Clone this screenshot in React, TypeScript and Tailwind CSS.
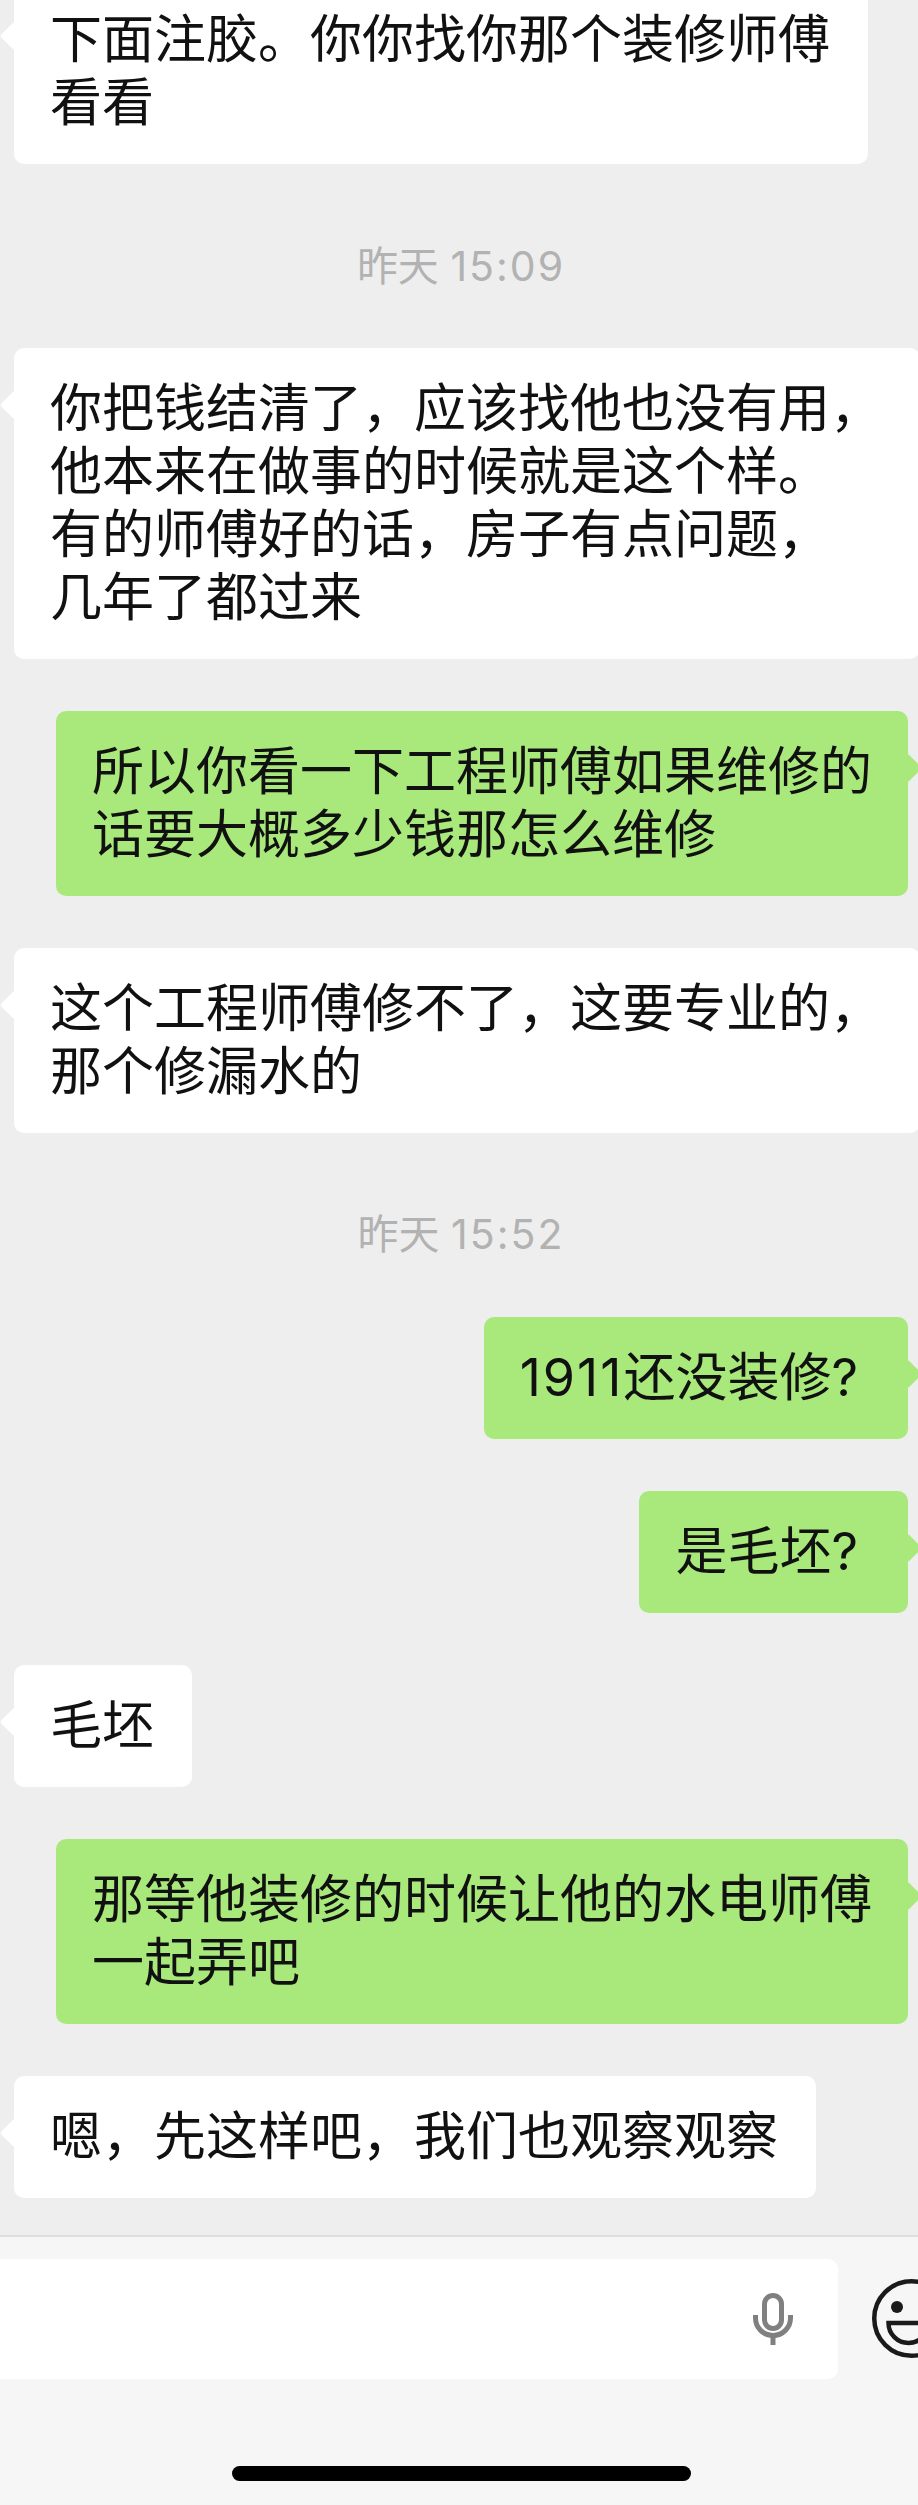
import type { ReactNode } from 'react'

const font = "font-['Inter','Noto_Sans_CJK_SC',sans-serif]"

interface BubbleProps {
  children: ReactNode
  mine?: boolean
  className?: string
}

const Bubble = ({ children, mine, className = '' }: BubbleProps) => {
  return (
    <div className={`flex ${mine ? 'justify-end pr-[10px]' : 'justify-start pl-[14px]'}`}>
      <div
        className={`relative rounded-[10px] pt-[29px] pb-[30px] text-[52px] leading-[63px] whitespace-pre text-[#111] ${
          mine ? 'bg-[#a9e97c] px-[36px]' : 'bg-white pl-[36px] pr-[38px]'
        } ${className}`}
      >
        {children}
        <div
          className={`absolute top-[47px] w-[20px] h-[20px] rotate-45 rounded-[2px] ${
            mine ? 'right-[-10px] bg-[#a9e97c]' : 'left-[-10px] bg-white'
          }`}
        />
      </div>
    </div>
  )
}

const Time = ({ day, clock }: { day: string; clock: string }) => (
  <div className="text-center pl-[4px] text-[41px] leading-[50px] text-[#b2b2b2]">
    {day} <span className="tracking-[2px]">{clock}</span>
  </div>
)

export default function App() {
  return (
    <div className={`h-[2505px] w-[918px] overflow-hidden flex flex-col bg-[#eeeeee] ${font}`}>
      <div className="flex-1 flex flex-col justify-end overflow-hidden pb-[37px]">
        <Bubble>
          <div>下面注胶。你你找你那个装修师傅</div>
          <div>看看</div>
        </Bubble>
        <div className="mt-[77px] mb-[57px]">
          <Time day="昨天" clock="15:09" />
        </div>
        <div className="flex flex-col gap-[52px]">
          <Bubble>
            <div>你把钱结清了，应该找他也没有用，</div>
            <div>他本来在做事的时候就是这个样。</div>
            <div>有的师傅好的话，房子有点问题，</div>
            <div>几年了都过来</div>
          </Bubble>
          <Bubble mine>
            <div>所以你看一下工程师傅如果维修的</div>
            <div>话要大概多少钱那怎么维修</div>
          </Bubble>
          <Bubble>
            <div>这个工程师傅修不了，这要专业的，</div>
            <div>那个修漏水的</div>
          </Bubble>
        </div>
        <div className="mt-[76px] mb-[58px]">
          <Time day="昨天" clock="15:52" />
        </div>
        <div className="flex flex-col gap-[52px]">
          <Bubble mine className="!pr-[50px]">
            <span className="tracking-[2px]">1911</span>还没装修?
          </Bubble>
          <Bubble mine className="!pr-[50px]">
            是毛坯?
          </Bubble>
          <Bubble>毛坯</Bubble>
          <Bubble mine>
            <div>那等他装修的时候让他的水电师傅</div>
            <div>一起弄吧</div>
          </Bubble>
          <Bubble>嗯，先这样吧，我们也观察观察</Bubble>
        </div>
      </div>

      {/* Input bar */}
      <div className="h-[270px] shrink-0 bg-[#f6f6f6] border-t-2 border-[#dedede] flex flex-col">
        <div className="flex items-start pt-[22px]">
          <div className="w-[838px] h-[120px] shrink-0 bg-white rounded-r-[10px] flex items-center justify-end pr-[45px]">
            <svg width="40" height="52" viewBox="0 0 40 52" fill="none" stroke="#808080" strokeWidth="5">
              <rect x="11.5" y="2.5" width="17" height="33" rx="8.5" />
              <path d="M2.5 22v3a17.5 17.5 0 0 0 35 0v-3" />
              <path d="M20 43v9" />
            </svg>
          </div>
          <svg className="ml-[34px] mt-[20px] shrink-0" width="46" height="80" viewBox="0 0 46 80" fill="none" stroke="#1a1a1a">
            <circle cx="39.5" cy="39.5" r="37.25" strokeWidth="4.5" />
            <circle cx="25" cy="28" r="6" fill="#1a1a1a" stroke="none" />
            <path d="M16.5 44h40a20 20 0 0 1-40 0z" strokeWidth="4.5" />
          </svg>
        </div>
        <div className="mt-auto mb-[24px] ml-[232px] w-[459px] h-[15px] rounded-full bg-black" />
      </div>
    </div>
  )
}
